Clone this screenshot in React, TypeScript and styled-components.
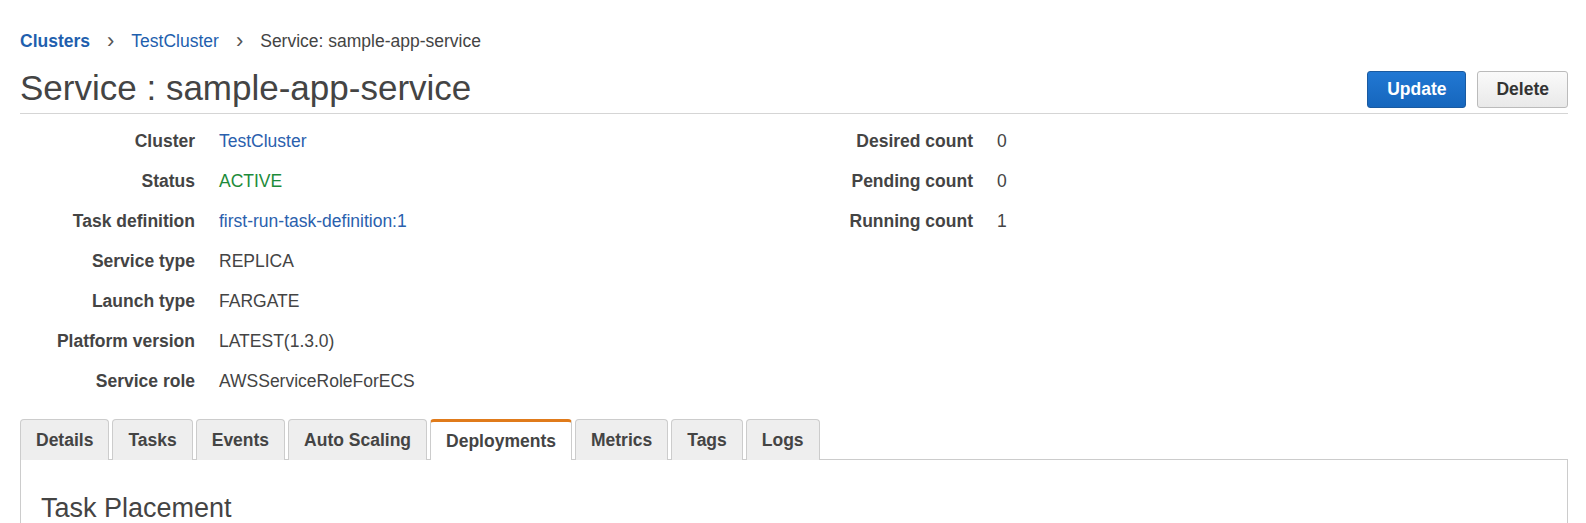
import React from 'react';
import styled, {createGlobalStyle} from 'styled-components';

type Field = {
    label: string;
    value: string;
    kind?: 'link' | 'ok';
};

const leftFields: Field[] = [
    {label: 'Cluster', value: 'TestCluster', kind: 'link'},
    {label: 'Status', value: 'ACTIVE', kind: 'ok'},
    {label: 'Task definition', value: 'first-run-task-definition:1', kind: 'link'},
    {label: 'Service type', value: 'REPLICA'},
    {label: 'Launch type', value: 'FARGATE'},
    {label: 'Platform version', value: 'LATEST(1.3.0)'},
    {label: 'Service role', value: 'AWSServiceRoleForECS'},
];

const rightFields: Field[] = [
    {label: 'Desired count', value: '0'},
    {label: 'Pending count', value: '0'},
    {label: 'Running count', value: '1'},
];

const tabs = ['Details', 'Tasks', 'Events', 'Auto Scaling', 'Deployments', 'Metrics', 'Tags', 'Logs'];

const App = () => {
    return (
        <>
            <GlobalStyle/>
            <Page>
                <Breadcrumb>
                    <CrumbLink $strong>Clusters</CrumbLink>
                    <Chevron>&#8250;</Chevron>
                    <CrumbLink>TestCluster</CrumbLink>
                    <Chevron>&#8250;</Chevron>
                    <CrumbCurrent>Service: sample-app-service</CrumbCurrent>
                </Breadcrumb>
                <Header>
                    <Title>Service : sample-app-service</Title>
                    <Actions>
                        <Button $primary>Update</Button>
                        <Button>Delete</Button>
                    </Actions>
                </Header>
                <Summary>
                    <FieldList>
                        {leftFields.map((f) => (
                            <FieldRow key={f.label}>
                                <FieldLabel>{f.label}</FieldLabel>
                                <FieldValue $kind={f.kind}>{f.value}</FieldValue>
                            </FieldRow>
                        ))}
                    </FieldList>
                    <FieldList>
                        {rightFields.map((f) => (
                            <FieldRow key={f.label}>
                                <FieldLabel>{f.label}</FieldLabel>
                                <FieldValue $kind={f.kind}>{f.value}</FieldValue>
                            </FieldRow>
                        ))}
                    </FieldList>
                </Summary>
                <TabBar>
                    {tabs.map((t) => (
                        <Tab key={t} $active={t === 'Deployments'}>{t}</Tab>
                    ))}
                </TabBar>
                <Panel>
                    <PanelTitle>Task Placement</PanelTitle>
                </Panel>
            </Page>
        </>
    );
};

export default App;

const GlobalStyle = createGlobalStyle`
  body {
    margin: 0;
    background: #fff;
    font-family: "Liberation Sans", Arial, sans-serif;
    color: #444;
  }
`;

const Page = styled.div`
  padding: 31px 18px 0 20px;
`;

const Breadcrumb = styled.div`
  display: flex;
  align-items: center;
  font-size: 17.5px;
  line-height: 20px;
`;

const CrumbLink = styled.span<{ $strong?: boolean }>`
  color: #1f5fae;
  font-weight: ${(p) => (p.$strong ? 700 : 400)};
  cursor: pointer;
`;

const Chevron = styled.span`
  color: #555;
  font-size: 22px;
  margin: 0 17px;
`;

const CrumbCurrent = styled.span`
  color: #444;
`;

const Header = styled.div`
  display: flex;
  justify-content: space-between;
  align-items: flex-end;
  padding: 17px 0 5px;
  border-bottom: 1px solid #d5d5d5;
`;

const Title = styled.h1`
  margin: 0;
  font-size: 35px;
  line-height: 40px;
  font-weight: 400;
  color: #444;
`;

const Actions = styled.div`
  display: flex;
  gap: 11px;
`;

const Button = styled.button<{ $primary?: boolean }>`
  height: 37px;
  padding: 0 ${(p) => (p.$primary ? 19 : 18)}px;
  font-family: inherit;
  font-size: 17.5px;
  font-weight: 700;
  border-radius: 3px;
  cursor: pointer;
  color: ${(p) => (p.$primary ? '#fff' : '#333')};
  border: 1px solid ${(p) => (p.$primary ? '#1a5aa0' : '#bbb')};
  background: ${(p) => (p.$primary
          ? 'linear-gradient(#2178d3, #1666bd)'
          : 'linear-gradient(#fafafa, #e9e9e9)')};
`;

const Summary = styled.div`
  display: grid;
  grid-template-columns: 778px 1fr;
  padding-top: 7px;
`;

const FieldList = styled.div`
  display: flex;
  flex-direction: column;
`;

const FieldRow = styled.div`
  display: grid;
  grid-template-columns: 175px 1fr;
  column-gap: 24px;
  font-size: 17.5px;
  line-height: 20px;
  padding: 10px 0;
`;

const FieldLabel = styled.div`
  text-align: right;
  font-weight: 700;
  color: #444;
`;

const FieldValue = styled.div<{ $kind?: 'link' | 'ok' }>`
  color: ${(p) => (p.$kind === 'link' ? '#2a60ad' : p.$kind === 'ok' ? '#1d8b3a' : '#444')};
`;

const TabBar = styled.div`
  display: flex;
  gap: 3px;
  margin-top: 18px;
  border-bottom: 1px solid #ccc;
`;

const Tab = styled.div<{ $active?: boolean }>`
  height: 41px;
  box-sizing: border-box;
  padding: 0 15px;
  display: flex;
  align-items: center;
  font-size: 17.5px;
  font-weight: 700;
  color: #444;
  border: 1px solid #ccc;
  border-bottom: none;
  border-top: ${(p) => (p.$active ? '3px solid #e07b1b' : '1px solid #ccc')};
  border-radius: 4px 4px 0 0;
  background: ${(p) => (p.$active ? '#fff' : '#eee')};
  margin-bottom: -1px;
  cursor: pointer;
`;

const Panel = styled.div`
  border: 1px solid #ccc;
  border-top: none;
  padding: 32px 20px;
  min-height: 200px;
`;

const PanelTitle = styled.h2`
  margin: 0;
  font-size: 27px;
  line-height: 32px;
  font-weight: 400;
  color: #444;
`;
